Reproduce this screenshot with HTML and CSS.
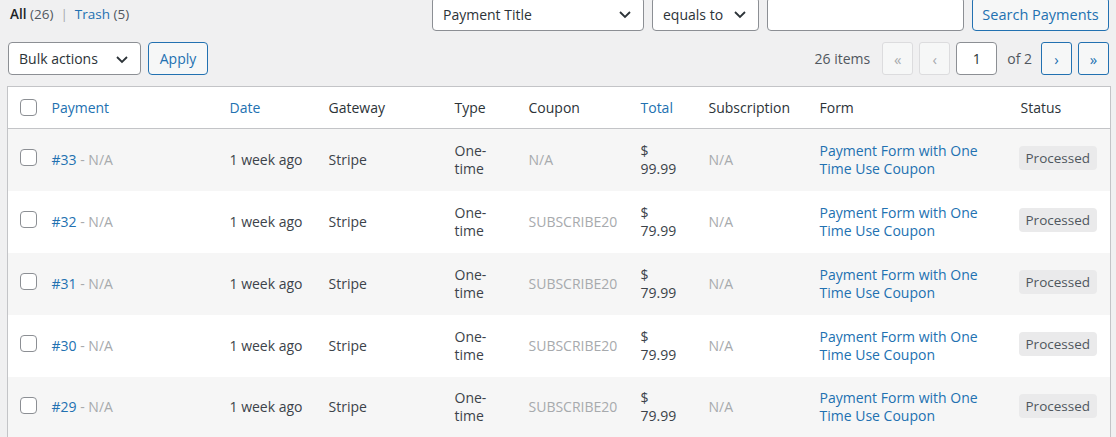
FILE: index.html
```html
<!DOCTYPE html>
<html lang="en">
<head>
    <meta charset="UTF-8">
    <meta name="viewport" content="width=device-width, initial-scale=1.0">
    <title>Payments</title>
    <link rel="stylesheet" href="styles.css">
</head>
<body>
  <div class="wrap">

    <div class="top-row">
      <ul class="subsubsub">
        <li><span class="current">All</span> <span class="count">(26)</span></li>
        <li class="sep">|</li>
        <li><a href="#">Trash</a> <span class="count">(5)</span></li>
      </ul>

      <div class="search-box">
        <div class="select w-title">Payment Title
          <svg viewBox="0 0 16 16"><path d="M3 6l5 5 5-5"/></svg>
        </div>
        <div class="select w-cond">equals to
          <svg viewBox="0 0 16 16"><path d="M3 6l5 5 5-5"/></svg>
        </div>
        <div class="text-input"></div>
        <button class="btn btn-search">Search Payments</button>
      </div>
    </div>

    <div class="tablenav">
      <div class="bulk">
        <div class="select w-bulk">Bulk actions
          <svg viewBox="0 0 16 16"><path d="M3 6l5 5 5-5"/></svg>
        </div>
        <button class="btn btn-apply">Apply</button>
      </div>

      <div class="pages">
        <span class="num">26 items</span>
        <span class="pg disabled">&laquo;</span>
        <span class="pg disabled">&lsaquo;</span>
        <span class="cur-page">1</span>
        <span class="of">of 2</span>
        <span class="pg">&rsaquo;</span>
        <span class="pg">&raquo;</span>
      </div>
    </div>

    <table class="list">
      <colgroup>
        <col class="c-cb"><col class="c-pay"><col class="c-date"><col class="c-gw"><col class="c-type">
        <col class="c-coupon"><col class="c-total"><col class="c-sub"><col class="c-form"><col class="c-status">
      </colgroup>
      <thead>
        <tr>
          <th><span class="cb"></span></th>
          <th><a href="#">Payment</a></th>
          <th><a href="#">Date</a></th>
          <th>Gateway</th>
          <th>Type</th>
          <th>Coupon</th>
          <th><a href="#">Total</a></th>
          <th>Subscription</th>
          <th>Form</th>
          <th>Status</th>
        </tr>
      </thead>
      <tbody>
        <tr>
          <td><span class="cb"></span></td>
          <td><a href="#">#33</a> <span class="muted">- N/A</span></td>
          <td>1 week ago</td>
          <td>Stripe</td>
          <td>One-<br>time</td>
          <td class="muted">N/A</td>
          <td>$<br>99.99</td>
          <td class="muted">N/A</td>
          <td><a href="#">Payment Form with One Time Use Coupon</a></td>
          <td><span class="badge">Processed</span></td>
        </tr>
        <tr>
          <td><span class="cb"></span></td>
          <td><a href="#">#32</a> <span class="muted">- N/A</span></td>
          <td>1 week ago</td>
          <td>Stripe</td>
          <td>One-<br>time</td>
          <td class="muted">SUBSCRIBE20</td>
          <td>$<br>79.99</td>
          <td class="muted">N/A</td>
          <td><a href="#">Payment Form with One Time Use Coupon</a></td>
          <td><span class="badge">Processed</span></td>
        </tr>
        <tr>
          <td><span class="cb"></span></td>
          <td><a href="#">#31</a> <span class="muted">- N/A</span></td>
          <td>1 week ago</td>
          <td>Stripe</td>
          <td>One-<br>time</td>
          <td class="muted">SUBSCRIBE20</td>
          <td>$<br>79.99</td>
          <td class="muted">N/A</td>
          <td><a href="#">Payment Form with One Time Use Coupon</a></td>
          <td><span class="badge">Processed</span></td>
        </tr>
        <tr>
          <td><span class="cb"></span></td>
          <td><a href="#">#30</a> <span class="muted">- N/A</span></td>
          <td>1 week ago</td>
          <td>Stripe</td>
          <td>One-<br>time</td>
          <td class="muted">SUBSCRIBE20</td>
          <td>$<br>79.99</td>
          <td class="muted">N/A</td>
          <td><a href="#">Payment Form with One Time Use Coupon</a></td>
          <td><span class="badge">Processed</span></td>
        </tr>
        <tr>
          <td><span class="cb"></span></td>
          <td><a href="#">#29</a> <span class="muted">- N/A</span></td>
          <td>1 week ago</td>
          <td>Stripe</td>
          <td>One-<br>time</td>
          <td class="muted">SUBSCRIBE20</td>
          <td>$<br>79.99</td>
          <td class="muted">N/A</td>
          <td><a href="#">Payment Form with One Time Use Coupon</a></td>
          <td><span class="badge">Processed</span></td>
        </tr>
      </tbody>
    </table>

  </div>
</body>
</html>
```

FILE: styles.css
```css
*{
    margin: 0;
    padding: 0;
    box-sizing: border-box;
}
body{
    background-color: #f0f0f1;
    color: #3c434a;
    font-family: "Open Sans", "Noto Sans", sans-serif;
    font-size: 14px;
    overflow: hidden;
}
a{
    color: #2271b1;
    text-decoration: none;
}
.wrap{
    padding: 0 6px 0 7px;
    margin-top: -3px;
}

/* top row */
.top-row{
    display: flex;
    justify-content: space-between;
    align-items: center;
    height: 34px;
}
.subsubsub{
    list-style: none;
    display: flex;
    gap: 6px;
    padding-left: 3px;
    font-size: 13.5px;
}
.subsubsub .current{
    font-weight: 600;
    color: #1d2327;
}
.count{
    color: #50575e;
}
.sep{
    color: #a7aaad;
    padding: 0 1px;
}
.search-box{
    display: flex;
    gap: 8px;
    padding-right: 1px;
}

.select{
    height: 34px;
    background: #fff;
    border: 1px solid #8c8f94;
    border-radius: 4px;
    display: flex;
    align-items: center;
    justify-content: space-between;
    padding: 0 10px 0 10px;
    color: #2c3338;
}
.select svg{
    width: 16px;
    height: 16px;
    fill: none;
    stroke: #2c3338;
    stroke-width: 1.8;
}
.w-title{ width: 212px; }
.w-cond{ width: 107px; }
.w-bulk{ width: 133px; height: 33px; }
.text-input{
    width: 197px;
    height: 34px;
    background: #fff;
    border: 1px solid #8c8f94;
    border-radius: 4px;
}

.btn{
    font-family: inherit;
    font-size: 14px;
    color: #2271b1;
    background: #f6f7f7;
    border: 1px solid #2271b1;
    border-radius: 4px;
    height: 34px;
    padding: 0 8px;
    white-space: nowrap;
}
.btn-search{ width: 137px; font-size: 14.5px; }
.btn-apply{ width: 60px; height: 33px; }

/* tablenav */
.tablenav{
    display: flex;
    justify-content: space-between;
    align-items: center;
    margin-top: 11px;
    height: 33px;
    padding-left: 1px;
}
.bulk{
    display: flex;
    gap: 7px;
}
.pages{
    display: flex;
    align-items: center;
    gap: 6px;
    padding-right: 1px;
}
.num{
    color: #50575e;
    margin-right: 6px;
}
.pg{
    width: 31px;
    height: 33px;
    border: 1px solid #2271b1;
    border-radius: 3px;
    background: #f6f7f7;
    color: #2271b1;
    display: flex;
    align-items: center;
    justify-content: center;
    font-size: 15px;
}
.pg.disabled{
    border-color: #dcdcde;
    color: #a7aaad;
}
.cur-page{
    width: 41px;
    height: 33px;
    background: #fff;
    border: 1px solid #8c8f94;
    border-radius: 4px;
    display: flex;
    align-items: center;
    justify-content: center;
    color: #2c3338;
}
.of{
    margin: 0 3px 0 4px;
    color: #50575e;
}

/* table */
.list{
    margin-top: 11px;
    width: 1103px;
    table-layout: fixed;
    border-collapse: collapse;
    border: 1px solid #c3c4c7;
    background: #fff;
}
.c-cb{ width: 34px; }
.c-pay{ width: 178px; }
.c-date{ width: 99px; }
.c-gw{ width: 126px; }
.c-type{ width: 74px; }
.c-coupon{ width: 112px; }
.c-total{ width: 68px; }
.c-sub{ width: 111px; }
.c-form{ width: 201px; }
.c-status{ width: 100px; }

.list th{
    height: 42px;
    font-weight: 400;
    text-align: left;
    padding: 0 10px;
    border-bottom: 1px solid #c3c4c7;
    color: #2c3338;
}
.list td{
    height: 62px;
    padding: 0 10px;
    line-height: 18px;
    vertical-align: middle;
}
.list th:first-child,
.list td:first-child{
    padding: 0 0 0 12px;
}
.list tbody tr:nth-child(odd){
    background: #f6f6f6;
}
.muted{
    color: #a7aaad;
}
.cb{
    display: block;
    width: 17px;
    height: 17px;
    border: 1px solid #8c8f94;
    border-radius: 4px;
    background: #fff;
}
.list td:first-child .cb{
    margin-top: -4px;
}
.badge{
    display: inline-block;
    background: #eaeaeb;
    color: #50575e;
    font-size: 13.5px;
    line-height: 18px;
    padding: 3px 7px;
    border-radius: 4px;
    margin-left: -2px;
    margin-top: -4px;
}
```
